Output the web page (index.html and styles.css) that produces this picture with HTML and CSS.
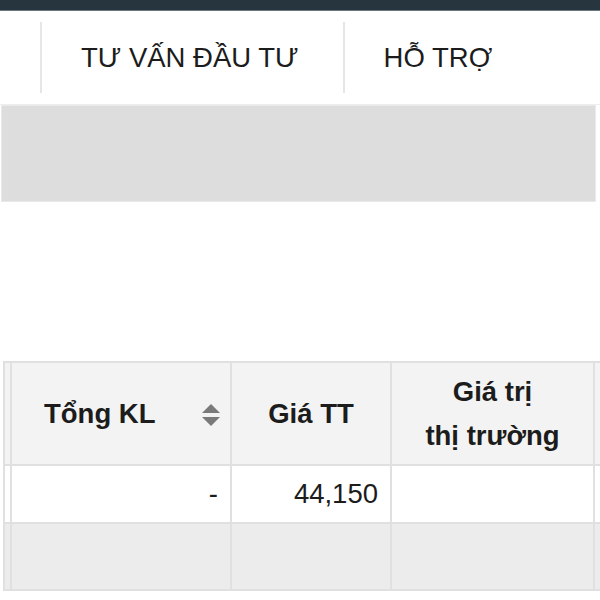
FILE: index.html
```html
<!DOCTYPE html>
<html lang="vi">
<head>
    <meta charset="UTF-8">
    <meta name="viewport" content="width=device-width, initial-scale=1.0">
    <title>Bảng giá</title>
    <link rel="stylesheet" href="styles.css">
</head>
<body>
    <div class="topbar"></div>

    <nav class="menu">
        <a class="menu-item" href="#">TƯ VẤN ĐẦU TƯ</a>
        <a class="menu-item" href="#">HỖ TRỢ</a>
    </nav>

    <div class="banner"></div>

    <div class="board">
        <table class="price-table">
            <colgroup>
                <col class="c-edge">
                <col class="c-kl">
                <col class="c-gia">
                <col class="c-gtt">
                <col class="c-rest">
            </colgroup>
            <thead>
                <tr>
                    <th></th>
                    <th class="sortable">Tổng KL
                        <svg class="sort-icon" width="20" height="24" viewBox="0 0 20 24">
                            <path d="M10 1 L19 10 L1 10 Z" fill="#7a7a7a"/>
                            <path d="M1 14 L19 14 L10 23 Z" fill="#7a7a7a"/>
                        </svg>
                    </th>
                    <th>Giá TT</th>
                    <th>Giá trị<br>thị trường</th>
                    <th></th>
                </tr>
            </thead>
            <tbody>
                <tr class="row-data">
                    <td></td>
                    <td class="num">-</td>
                    <td class="num">44,150</td>
                    <td></td>
                    <td></td>
                </tr>
                <tr class="row-empty">
                    <td></td>
                    <td></td>
                    <td></td>
                    <td></td>
                    <td></td>
                </tr>
            </tbody>
        </table>
    </div>
</body>
</html>
```

FILE: styles.css
```css
body {
    margin: 0;
    padding: 0;
    font-family: "Liberation Sans", Arial, sans-serif;
    color: #1c1c1c;
    background-color: white;
    overflow: hidden;
}
.topbar {
    height: 10px;
    background-color: #27353f;
    border-bottom: 1px solid #6b7780;
}
.menu {
    display: flex;
    padding: 11px 0 11px 40px;
    border-bottom: 1px solid #eeeeee;
}
.menu-item {
    display: flex;
    align-items: center;
    height: 71px;
    padding: 0 42px 0 39px;
    border-left: 2px solid #e6e6e6;
    color: #1c1c1c;
    text-decoration: none;
    font-size: 27.5px;
}
.menu-item:first-child {
    padding-right: 44px;
}
.banner {
    height: 95px;
    margin: 0 4px 0 1px;
    background-color: #dddddd;
    border: 1px solid #e9e9e9;
}
.board {
    margin-top: 159px;
    margin-left: 3px;
    width: 597px;
    overflow: hidden;
}
.price-table {
    border-collapse: collapse;
    table-layout: fixed;
    width: 640px;
    font-size: 27.5px;
}
.c-edge { width: 7px; }
.c-kl { width: 220px; }
.c-gia { width: 160px; }
.c-gtt { width: 203px; }
.c-rest { width: 50px; }
.price-table th,
.price-table td {
    border: 2px solid #e0e0e0;
    padding: 0 12px;
}
.price-table th {
    height: 101px;
    background-color: #f3f3f3;
    font-weight: bold;
    line-height: 44px;
    text-align: center;
}
.price-table th.sortable {
    position: relative;
    text-align: left;
    padding-left: 32px;
}
.sort-icon {
    position: absolute;
    right: 9px;
    top: 40px;
}
.row-data td {
    height: 56px;
    background-color: white;
}
.row-empty td {
    height: 65px;
    background-color: #ececec;
}
.num {
    text-align: right;
}
```
